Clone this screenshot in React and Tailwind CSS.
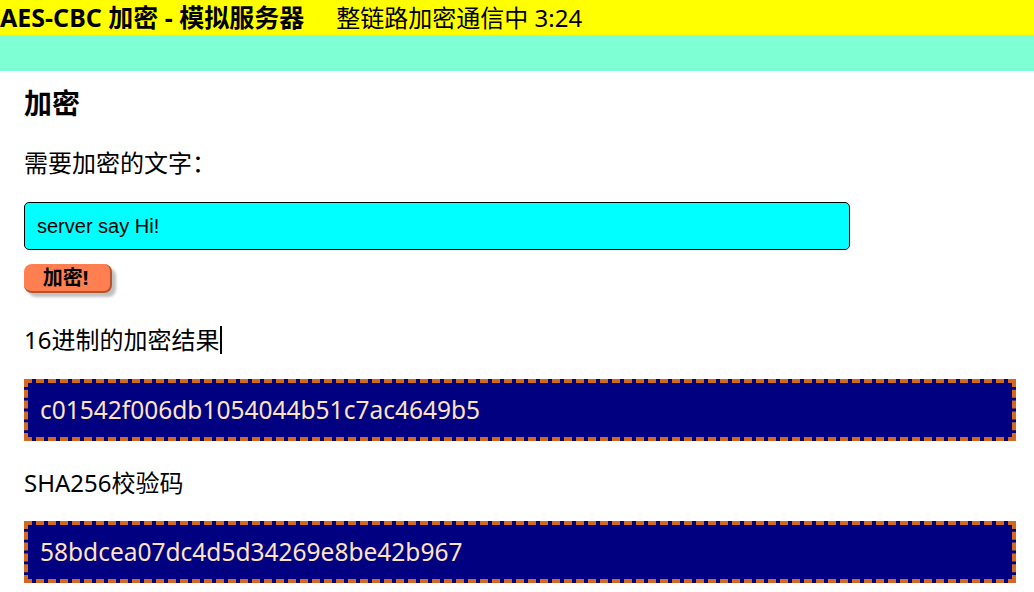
import React from "react";

export default function App() {
  return (
    <div className="w-[1034px] h-[592px] bg-white text-black overflow-hidden font-['Noto_Sans','Noto_Sans_CJK_SC',sans-serif]">
      <div className="h-[35px] bg-[#ffff00] flex items-center whitespace-nowrap">
        <span className="text-[25px] font-bold leading-none">AES-CBC 加密 - 模拟服务器</span>
        <span className="text-[24px] leading-none ml-[32px]">整链路加密通信中 3:24</span>
      </div>
      <div className="h-[36px] bg-[#7fffd4]" />
      <div className="pl-6 pr-[18px]">
        <h2 className="h-[28px] mt-[18px] flex items-center text-[28px] font-bold leading-none">加密</h2>
        <p className="h-[24px] mt-[34px] flex items-center text-[24px] leading-none">需要加密的文字：</p>
        <div className="mt-[27px] w-[826px] h-[48px] bg-[#00ffff] border border-black rounded-[5px] flex items-center pl-3">
          <span className="text-[20px] font-['Liberation_Sans',sans-serif]">server say Hi!</span>
        </div>
        <button className="mt-[14px] w-[88px] h-[29px] bg-[#ff7f50] rounded-[8px] border-r-2 border-b-2 border-[#b4532c] shadow-[4px_4px_3px_#c0c0c0] text-[20px] font-bold leading-none flex items-center justify-center pr-[3px]">
          加密!
        </button>
        <p className="h-[24px] mt-[35px] flex items-center text-[24px] leading-none">
          16进制的加密结果<span className="inline-block w-[2px] h-[28px] bg-black ml-[1px]" />
        </p>
        <div className="mt-[27px] h-[62px] bg-[#000080] border-4 border-dashed border-[#d2691e] flex items-center pl-3">
          <span className="text-[24.5px] text-[#ffe4c4] leading-none">c01542f006db1054044b51c7ac4649b5</span>
        </div>
        <p className="h-[24px] mt-[30px] flex items-center text-[24px] leading-none">SHA256校验码</p>
        <div className="mt-[26px] h-[62px] bg-[#000080] border-4 border-dashed border-[#d2691e] flex items-center pl-3">
          <span className="text-[24.5px] text-[#ffe4c4] leading-none">58bdcea07dc4d5d34269e8be42b967</span>
        </div>
      </div>
    </div>
  );
}
